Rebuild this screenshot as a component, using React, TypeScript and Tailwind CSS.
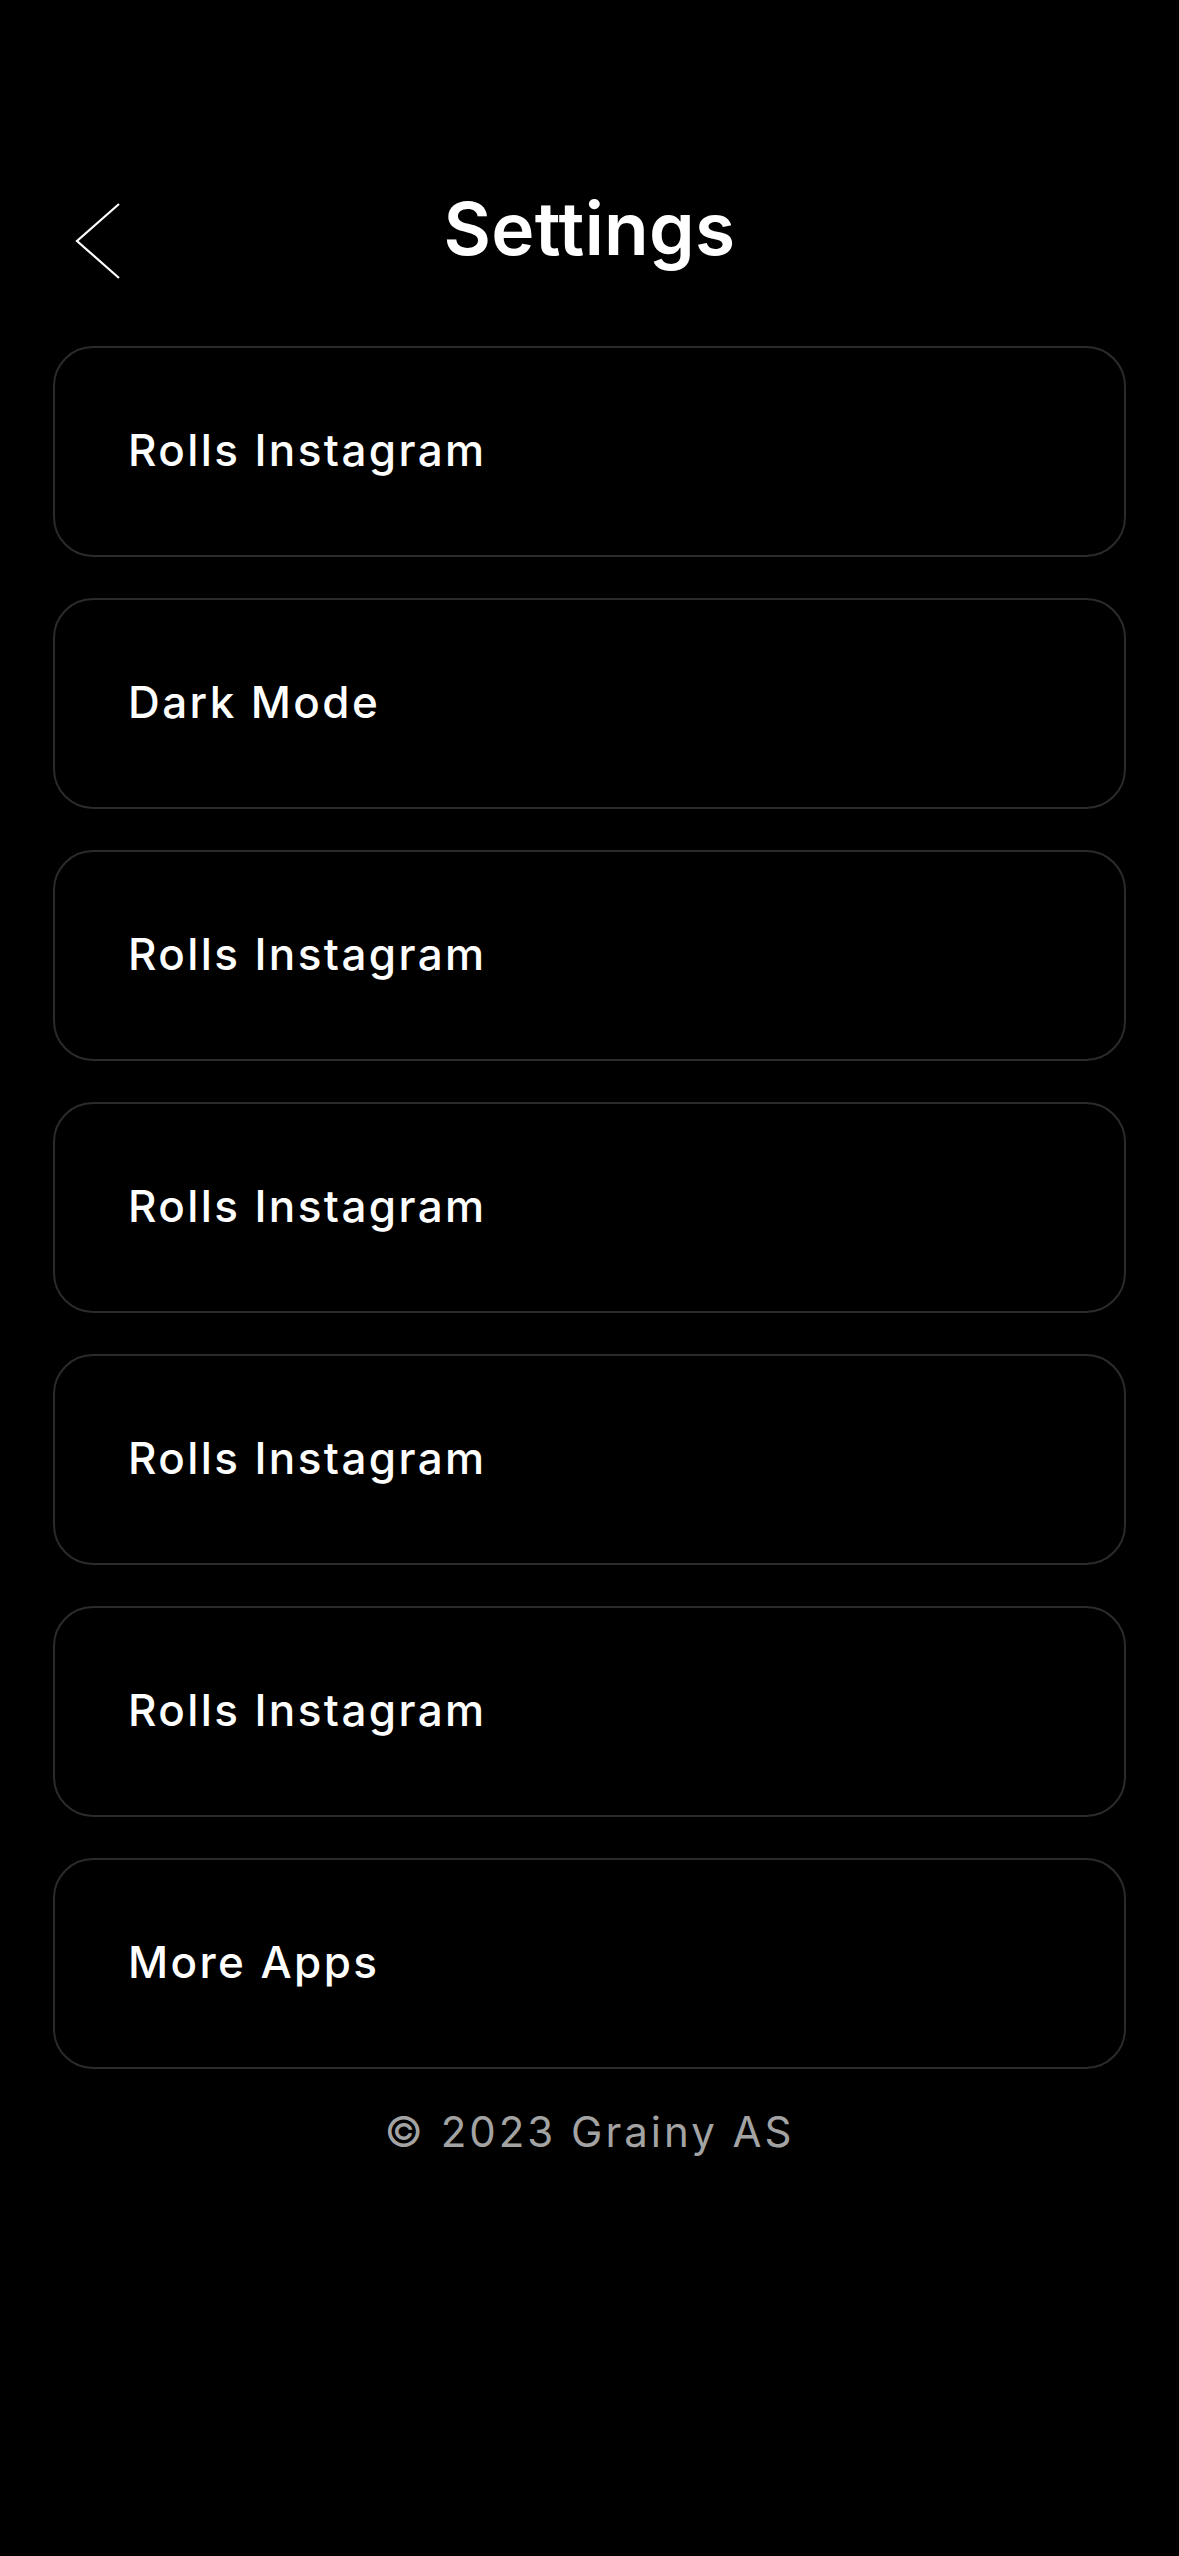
const items = [
  "Rolls Instagram",
  "Dark Mode",
  "Rolls Instagram",
  "Rolls Instagram",
  "Rolls Instagram",
  "Rolls Instagram",
  "More Apps",
];

export default function App() {
  return (
    <div className="min-h-[2556px] w-[1179px] bg-black pt-[168px] text-white" style={{ fontFamily: "Inter, 'Noto Sans', sans-serif" }}>
      {/* Header */}
      <div className="relative flex h-[120px] items-center justify-center px-[53px]">
        <button className="absolute left-[72px] top-[33px]">
          <svg width="52" height="80" viewBox="0 0 52 80" fill="none" stroke="#ffffff" strokeWidth="2.2">
            <polyline points="47,3 5,40 47,77" />
          </svg>
        </button>
        <h1 className="text-[73px] font-semibold leading-none tracking-[0.3px]">Settings</h1>
      </div>

      {/* List */}
      <div className="mt-[58px] flex flex-col gap-[41px] px-[53px]">
        {items.map((label, i) => (
          <div key={i} className="flex h-[211px] items-center rounded-[40px] border-2 border-[#2b2b2b] pb-[4px] pl-[73px]">
            <span className="text-[44px] font-medium leading-none tracking-[2.4px]">{label}</span>
          </div>
        ))}
      </div>

      {/* Footer */}
      <p className="mt-[42px] text-center text-[42px] leading-none tracking-[3px] text-[#a3a3a3]">© 2023 Grainy AS</p>
    </div>
  );
}
